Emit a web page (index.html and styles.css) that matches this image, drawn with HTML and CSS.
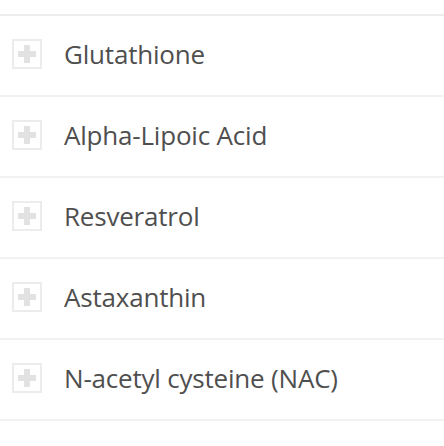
FILE: index.html
```html
<!DOCTYPE html>
<html>
<head>
<meta charset="utf-8">
<link rel="stylesheet" href="styles.css">
</head>
<body>
<ul class="list">
  <li class="item"><span class="toggle"></span><span class="label">Glutathione</span></li>
  <li class="item"><span class="toggle"></span><span class="label">Alpha-Lipoic Acid</span></li>
  <li class="item"><span class="toggle"></span><span class="label">Resveratrol</span></li>
  <li class="item"><span class="toggle"></span><span class="label">Astaxanthin</span></li>
  <li class="item"><span class="toggle"></span><span class="label">N-acetyl cysteine (NAC)</span></li>
</ul>
</body>
</html>
```
FILE: styles.css
```css
html, body {
  margin: 0;
  background: #fff;
}
.list {
  list-style: none;
  margin: 14px 0 0;
  padding: 0;
  border-top: 2px solid #ededed;
}
.item {
  height: 79px;
  border-bottom: 2px solid #f2f2f2;
  display: flex;
  align-items: center;
  padding-left: 12px;
  font-family: "Open Sans", sans-serif;
  font-size: 26px;
  color: #4f4f4f;
}
.toggle {
  position: relative;
  width: 26px;
  height: 26px;
  border: 2px solid #ececec;
  margin-right: 22px;
  margin-top: -3px;
  flex: none;
}
.toggle::before, .toggle::after {
  content: "";
  position: absolute;
  background: #e2e2e2;
}
.toggle::before {
  left: 4px; right: 4px; top: 10px; height: 6px;
}
.toggle::after {
  top: 4px; bottom: 4px; left: 10px; width: 6px;
}
.label {
  line-height: 1;
  letter-spacing: -0.2px;
  margin-top: -3px;
}
```
